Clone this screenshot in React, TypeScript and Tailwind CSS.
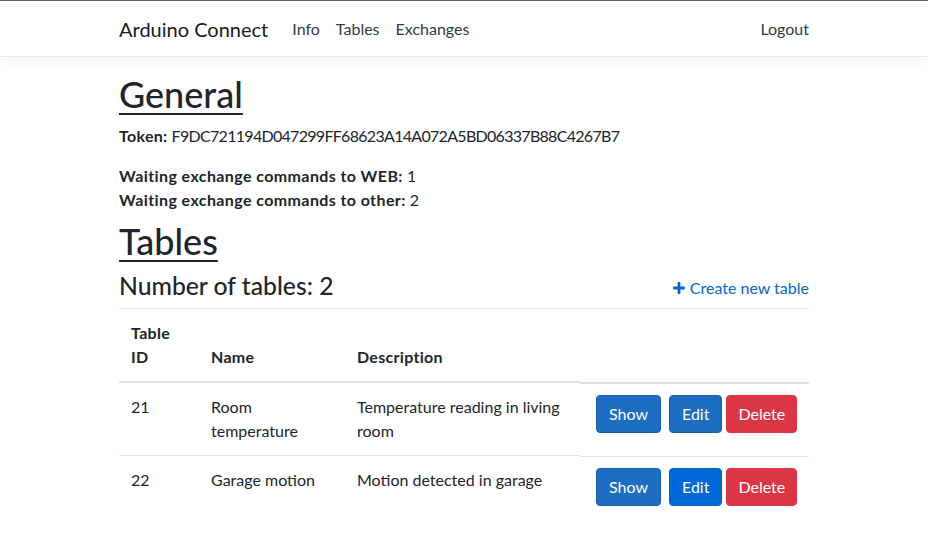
import React from "react";

type Row = { id: number; name: string; description: string; editFocused?: boolean };

const rows: Row[] = [
  { id: 21, name: "Room temperature", description: "Temperature reading in living room" },
  { id: 22, name: "Garage motion", description: "Motion detected in garage", editFocused: true },
];

function PlusIcon() {
  return (
    <svg width="12" height="12" viewBox="0 0 12 12" className="inline-block">
      <path
        d="M4.6 0.8 Q4.6 0 5.4 0 H6.6 Q7.4 0 7.4 0.8 V4.6 H11.2 Q12 4.6 12 5.4 V6.6 Q12 7.4 11.2 7.4 H7.4 V11.2 Q7.4 12 6.6 12 H5.4 Q4.6 12 4.6 11.2 V7.4 H0.8 Q0 7.4 0 6.6 V5.4 Q0 4.6 0.8 4.6 H4.6 Z"
        fill="currentColor"
      />
    </svg>
  );
}

const btn = "rounded border px-3 py-[6px] leading-6 text-white";
const th = "border-b-2 border-[#dee2e6] p-3 align-bottom font-bold tracking-[0.3px]";

export default function App() {
  return (
    <div
      className="min-h-screen bg-white text-[16px] leading-6 text-[#212529]"
      style={{ fontFamily: 'Lato, "Open Sans", sans-serif' }}
    >
      <header className="mb-4 h-[57px] border-t border-b border-t-[#5f5f5f] border-b-[#e5e5e5] bg-white shadow-[0_4px_12px_rgba(0,0,0,0.05)]">
        <nav className="mx-auto flex h-full w-[690px] items-center">
          <span className="mr-4 text-[20px] text-[#1a1a1a]">Arduino Connect</span>
          <ul className="flex text-[#343a40]">
            <li className="px-2">Info</li>
            <li className="px-2">Tables</li>
            <li className="px-2">Exchanges</li>
          </ul>
          <span className="ml-auto text-[#343a40]">Logout</span>
        </nav>
      </header>

      <main className="mx-auto w-[690px]">
        <h1 className="mb-2 text-[36px] leading-[43px] font-medium underline decoration-[2px] underline-offset-[5px]">
          General
        </h1>
        <p className="mb-4">
          <b className="tracking-[0.3px]">Token:</b>{" "}
          <span className="tracking-[-0.7px]">F9DC721194D047299FF68623A14A072A5BD06337B88C4267B7</span>
        </p>
        <p className="mb-2">
          <b className="tracking-[0.4px]">Waiting exchange commands to WEB:</b> 1
          <br />
          <b className="tracking-[0.4px]">Waiting exchange commands to other:</b> 2
        </p>

        <h1 className="mb-2 text-[36px] leading-[43px] font-medium underline decoration-[2px] underline-offset-[5px]">
          Tables
        </h1>
        <div className="mb-2 flex items-end justify-between">
          <h4 className="text-[24.7px] leading-[29px] font-medium">Number of tables: 2</h4>
          <a className="flex items-center gap-[5px] text-[#0366d6]">
            <PlusIcon />
            Create new table
          </a>
        </div>

        <table className="w-full table-fixed border-separate border-spacing-0 border-t border-[#dee2e6] text-left">
          <colgroup>
            <col className="w-[80px]" />
            <col className="w-[146px]" />
            <col className="w-[235px]" />
            <col className="w-[229px]" />
          </colgroup>
          <thead>
            <tr>
              <th className={th}>Table ID</th>
              <th className={th}>Name</th>
              <th className={th}>Description</th>
              <th className="relative top-[1px] border-b-2 border-[#dee2e6] p-3"></th>
            </tr>
          </thead>
          <tbody>
            {rows.map((r, i) => {
              const cell = i > 0 ? "border-t border-[#dee2e6] p-3 align-top" : "p-3 align-top";
              return (
                <tr key={r.id}>
                  <td className={cell}>{r.id}</td>
                  <td className={cell}>{r.name}</td>
                  <td className={cell}>{r.description}</td>
                  <td
                    className={
                      i > 0
                        ? "relative top-[1px] border-t border-[#dee2e6] pt-[11px] pr-3 pb-3 pl-4 align-top"
                        : "relative top-[1px] pt-[11px] pr-3 pb-3 pl-4 align-top"
                    }
                  >
                    <div className="flex">
                      <span className={`${btn} border-[#1861ac] bg-[#1b6ec2]`}>Show</span>
                      <span
                        className={
                          r.editFocused
                            ? `${btn} ml-2 border-[#0062cc] bg-[#0069d9]`
                            : `${btn} ml-2 border-[#1861ac] bg-[#1b6ec2]`
                        }
                      >
                        Edit
                      </span>
                      <span className={`${btn} ml-1 border-[#dc3545] bg-[#dc3545] px-[11px]`}>Delete</span>
                    </div>
                  </td>
                </tr>
              );
            })}
          </tbody>
        </table>
      </main>
    </div>
  );
}
